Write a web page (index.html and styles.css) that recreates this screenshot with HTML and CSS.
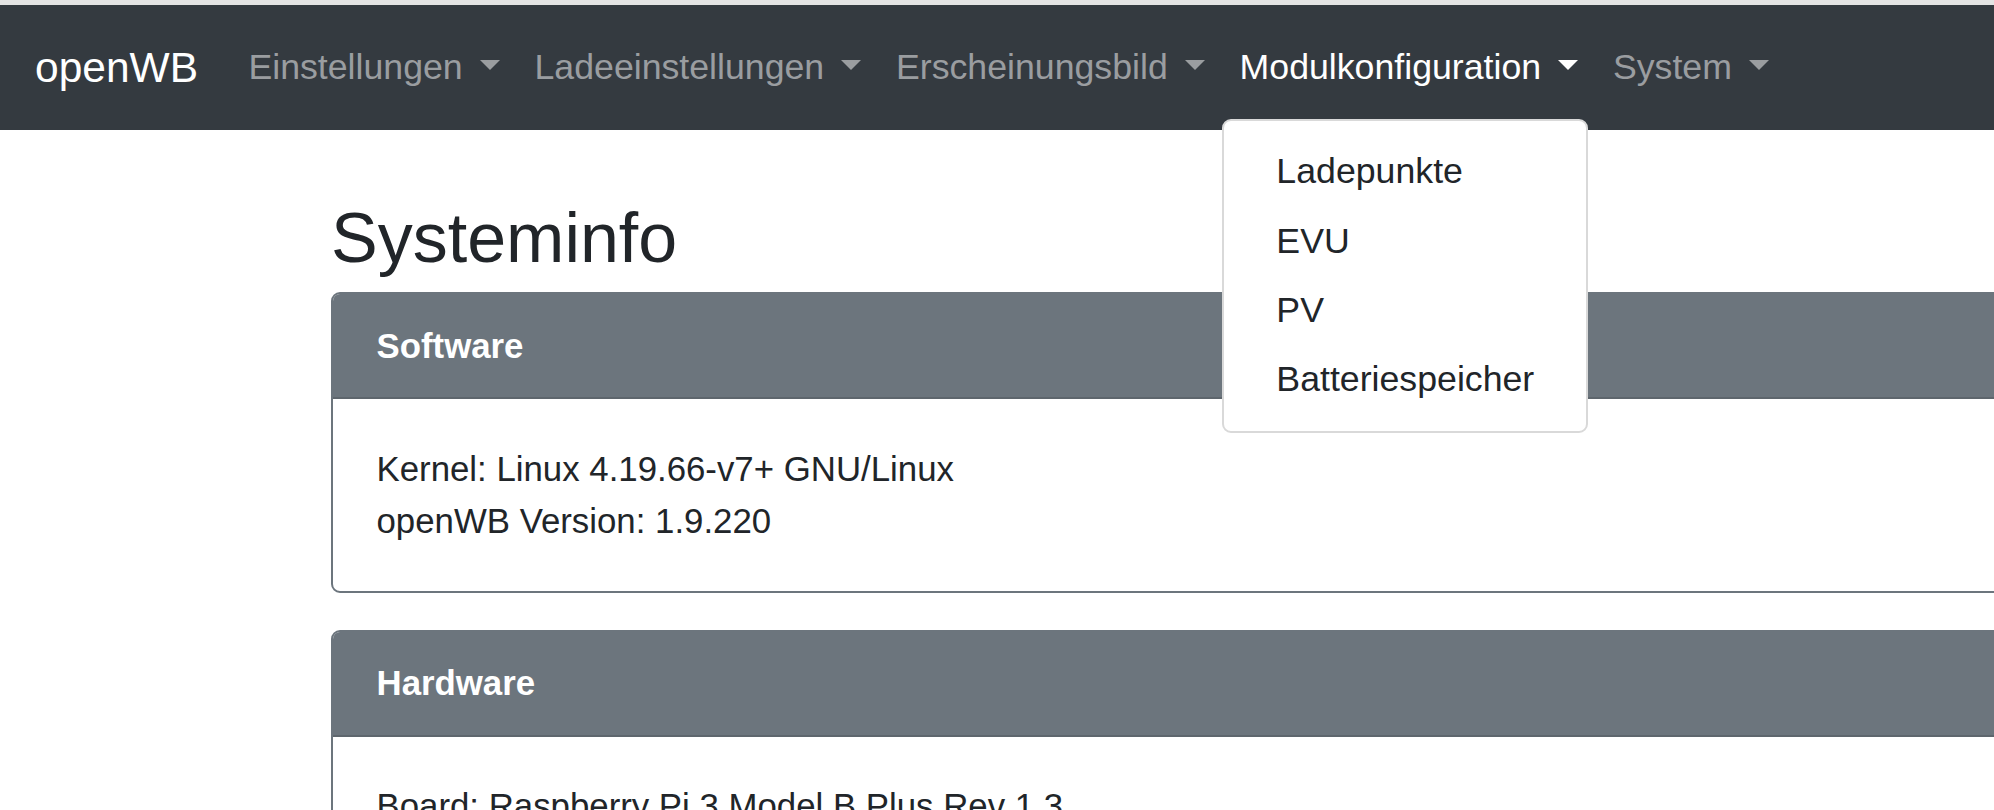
FILE: index.html
```html
<!DOCTYPE html>
<html lang="de">
<head>
<meta charset="utf-8">
<title>openWB Systeminfo</title>
<link rel="stylesheet" href="styles.css">
</head>
<body>
<div class="topstrip"></div>
<nav class="navbar">
  <a class="brand" href="#">openWB</a>
  <ul class="nav">
    <li class="nav-item"><a class="nav-link" href="#">Einstellungen<span class="caret"></span></a></li>
    <li class="nav-item"><a class="nav-link" href="#">Ladeeinstellungen<span class="caret"></span></a></li>
    <li class="nav-item"><a class="nav-link" href="#">Erscheinungsbild<span class="caret"></span></a></li>
    <li class="nav-item">
      <a class="nav-link active" href="#">Modulkonfiguration<span class="caret"></span></a>
      <div class="dropdown-menu">
        <a class="dropdown-item" href="#">Ladepunkte</a>
        <a class="dropdown-item" href="#">EVU</a>
        <a class="dropdown-item" href="#">PV</a>
        <a class="dropdown-item" href="#">Batteriespeicher</a>
      </div>
    </li>
    <li class="nav-item"><a class="nav-link" href="#">System<span class="caret"></span></a></li>
  </ul>
</nav>
<main class="container">
  <h2 class="title">Systeminfo</h2>
  <section class="card">
    <div class="card-header">Software</div>
    <div class="card-body">
      <div>Kernel: Linux 4.19.66-v7+ GNU/Linux</div>
      <div>openWB Version: 1.9.220</div>
    </div>
  </section>
  <section class="card">
    <div class="card-header">Hardware</div>
    <div class="card-body">
      <div>Board: Raspberry Pi 3 Model B Plus Rev 1.3</div>
    </div>
  </section>
</main>
</body>
</html>
```

FILE: styles.css
```css
html, body {
  margin: 0;
  padding: 0;
}

body {
  width: 1994px;
  height: 810px;
  overflow: hidden;
  background: #fff;
  color: #212529;
  font-family: "Liberation Sans", Arial, sans-serif;
  font-size: 34.8px;
  line-height: 1.5;
}

.topstrip {
  height: 5px;
  background: #e4e4e4;
}

.navbar {
  position: relative;
  z-index: 10;
  display: flex;
  align-items: center;
  height: 125px;
  padding: 0 35px;
  background: #343a40;
}

.brand {
  margin-right: 33px;
  color: #fff;
  font-size: 42.5px;
  line-height: 1.5;
  text-decoration: none;
}

.nav {
  display: flex;
  margin: 0;
  padding: 0;
  list-style: none;
}

.nav-item {
  position: relative;
}

.nav-link {
  display: block;
  padding: 17.4px;
  color: #9a9da0;
  font-size: 35.7px;
  text-decoration: none;
}

.nav-link.active {
  color: #fff;
}

.caret {
  display: inline-block;
  width: 0;
  height: 0;
  margin-left: 17px;
  vertical-align: 0.255em;
  border-top: 0.29em solid;
  border-right: 0.29em solid transparent;
  border-left: 0.29em solid transparent;
  border-bottom: 0;
}

.dropdown-menu {
  position: absolute;
  top: calc(100% + 7px);
  left: 0;
  padding: 17px 0;
  background: #fff;
  border: 2px solid #d9d9d9;
  border-radius: 9px;
}

.dropdown-item {
  display: block;
  padding: 7.8px 52.2px;
  color: #212529;
  font-size: 35.7px;
  white-space: nowrap;
  text-decoration: none;
}

.container {
  width: 1800px;
  padding: 66px 0 0 331px;
}

.title {
  margin: 0 0 12px;
  font-size: 70px;
  font-weight: 500;
  line-height: 1.2;
}

.card {
  margin-bottom: 37px;
  border: 2px solid #6c757d;
  border-radius: 9px;
  overflow: hidden;
}

.card-header {
  padding: 25.5px 43.5px;
  background: #6c757d;
  color: #fff;
  font-weight: bold;
  border-bottom: 2px solid #5e666d;
}

.card-body {
  padding: 43.5px;
}
```
